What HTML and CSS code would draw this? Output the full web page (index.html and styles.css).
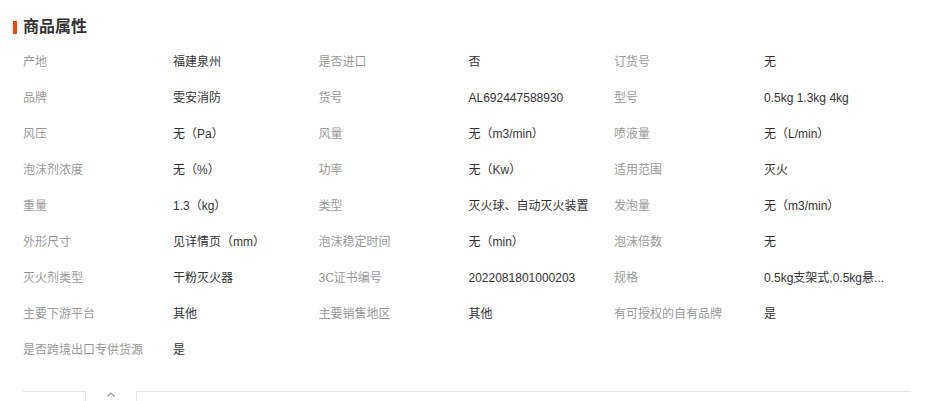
FILE: index.html
```html
<!DOCTYPE html>
<html lang="zh-CN">
<head>
  <meta charset="UTF-8">
  <title>商品属性</title>
  <link rel="stylesheet" href="styles.css">
</head>
<body>
  <div class="attr-section">
    <h2 class="attr-title">商品属性</h2>

    <div class="attr-grid">
      <span class="attr-name">产地</span><span class="attr-value">福建泉州</span>
      <span class="attr-name">是否进口</span><span class="attr-value">否</span>
      <span class="attr-name">订货号</span><span class="attr-value">无</span>

      <span class="attr-name">品牌</span><span class="attr-value">雯安消防</span>
      <span class="attr-name">货号</span><span class="attr-value">AL692447588930</span>
      <span class="attr-name">型号</span><span class="attr-value">0.5kg 1.3kg 4kg</span>

      <span class="attr-name">风压</span><span class="attr-value">无（Pa）</span>
      <span class="attr-name">风量</span><span class="attr-value">无（m3/min）</span>
      <span class="attr-name">喷液量</span><span class="attr-value">无（L/min）</span>

      <span class="attr-name">泡沫剂浓度</span><span class="attr-value">无（%）</span>
      <span class="attr-name">功率</span><span class="attr-value">无（Kw）</span>
      <span class="attr-name">适用范围</span><span class="attr-value">灭火</span>

      <span class="attr-name">重量</span><span class="attr-value">1.3（kg）</span>
      <span class="attr-name">类型</span><span class="attr-value">灭火球、自动灭火装置</span>
      <span class="attr-name">发泡量</span><span class="attr-value">无（m3/min）</span>

      <span class="attr-name">外形尺寸</span><span class="attr-value">见详情页（mm）</span>
      <span class="attr-name">泡沫稳定时间</span><span class="attr-value">无（min）</span>
      <span class="attr-name">泡沫倍数</span><span class="attr-value">无</span>

      <span class="attr-name">灭火剂类型</span><span class="attr-value">干粉灭火器</span>
      <span class="attr-name">3C证书编号</span><span class="attr-value">2022081801000203</span>
      <span class="attr-name">规格</span><span class="attr-value" title="0.5kg支架式,0.5kg悬挂式">0.5kg支架式,0.5kg悬...</span>

      <span class="attr-name">主要下游平台</span><span class="attr-value">其他</span>
      <span class="attr-name">主要销售地区</span><span class="attr-value">其他</span>
      <span class="attr-name">有可授权的自有品牌</span><span class="attr-value">是</span>

      <span class="attr-name">是否跨境出口专供货源</span><span class="attr-value">是</span>
    </div>

    <div class="tab-bar">
      <div class="tab-left"></div>
      <div class="tab-toggle">
        <svg width="8" height="5" viewBox="0 0 8 5"><polyline points="0.5,4.5 4,1 7.5,4.5" fill="none" stroke="#8a9bb3" stroke-width="1.2"/></svg>
      </div>
      <div class="tab-right"></div>
    </div>
  </div>
</body>
</html>
```

FILE: styles.css
```css
body {
  margin: 0;
  background: #fff;
  font-family: "Liberation Sans", "Noto Sans CJK SC", sans-serif;
  color: #333;
}
.attr-section {
  padding: 17px 29px 0 13px;
}
.attr-title {
  display: flex;
  align-items: center;
  margin: 0;
  font-size: 16px;
  line-height: 20px;
  font-weight: bold;
  color: #333;
}
.attr-title::before {
  content: "";
  width: 4px;
  height: 13px;
  margin-right: 6px;
  background-color: #ff4400;
}
.attr-grid {
  display: grid;
  grid-template-columns: repeat(3, 150px 145.5px);
  grid-auto-rows: 36px;
  margin: 7px 0 0 10px;
  font-size: 12px;
  line-height: 36px;
}
.attr-name {
  color: #999;
  white-space: nowrap;
}
.attr-value {
  color: #333;
  white-space: nowrap;
}
.tab-bar {
  display: flex;
  height: 20px;
  margin: 23px 0 0 10px;
}
.tab-left {
  width: 62px;
  border-top: 1px solid #e5e5e5;
  border-right: 1px solid #e5e5e5;
}
.tab-toggle {
  width: 50px;
  display: flex;
  justify-content: center;
  padding-top: 1px;
}
.tab-toggle svg {
  display: block;
}
.tab-right {
  flex: 1;
  border-top: 1px solid #e5e5e5;
  border-left: 1px solid #e5e5e5;
}
```
